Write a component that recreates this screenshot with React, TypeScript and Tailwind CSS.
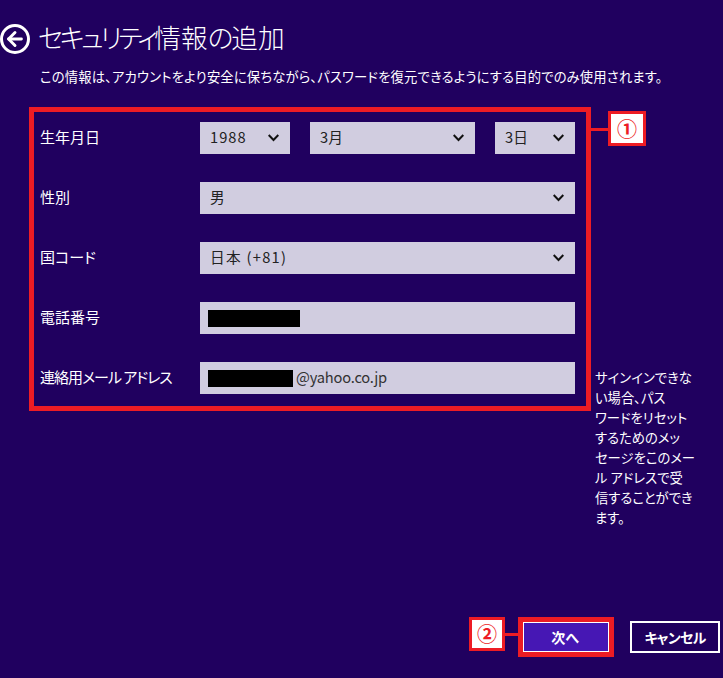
import { ArrowLeft } from "lucide-react";

const font = "[font-family:'Noto_Sans_CJK_JP','Noto_Sans',sans-serif] [font-feature-settings:'palt']";

function Select({ value, width, spacing = "" }: { value: string; width: string; spacing?: string }) {
    return (
        <div className={`${width} h-8 bg-[#d1cde0] flex items-center justify-between pl-[10px] pr-[11px] text-[14.67px] text-[#222]`}>
            <span className={`-mt-0.5 ${spacing}`}>{value}</span>
            <svg width="11" height="8" viewBox="0 0 11 8" fill="none" stroke="#111" strokeWidth="2">
                <path d="M0.7 1 L5.5 6 L10.3 1" />
            </svg>
        </div>
    );
}

function Row({ label, spacing = "", children }: { label: string; spacing?: string; children: React.ReactNode }) {
    return (
        <div className="flex items-center h-8">
            <div className={`w-[160px] -mt-0.5 text-[15px] text-white ${spacing}`}>{label}</div>
            <div className="flex-1 flex justify-between">{children}</div>
        </div>
    );
}

export default function App() {
    return (
        <main className={`${font} w-[723px] h-[678px] bg-[#20005f] text-white overflow-hidden flex flex-col`}>
            {/* Title */}
            <header className="flex items-center h-[30px] mt-[24px]">
                <div className="w-[30px] h-[30px] rounded-full border-[3px] border-white flex items-center justify-center">
                    <ArrowLeft size={22} strokeWidth={3.2} />
                </div>
                <h1 className="ml-[8px] -mt-[3px] text-[26.67px] font-light leading-none">
                    <span className="tracking-[-3.6px]">セキュリティ</span>
                    <span>情報</span>
                    <span className="tracking-[-2px]">の</span>
                    <span>追加</span>
                </h1>
            </header>
            <p className="ml-[40px] mt-[13px] text-[13.33px] leading-5 h-5 tracking-[0.16px]">
                この情報は、アカウントをより安全に保ちながら、パスワードを復元できるようにする目的でのみ使用されます。
            </p>

            <div className="flex items-start mt-[20px]">
                {/* Form frame */}
                <div className="relative ml-[29px] w-[562px] h-[304px] border-[5px] border-[#ed1c24] pt-[10px] pl-[6px] pr-[11px] flex flex-col gap-7">
                    <Row label="生年月日">
                        <Select value="1988" width="w-[90px]" spacing="tracking-[1px]" />
                        <Select value="3月" width="w-[165px]" />
                        <Select value="3日" width="w-[80px]" />
                    </Row>
                    <Row label="性別">
                        <Select value="男" width="w-full" />
                    </Row>
                    <Row label="国コード">
                        <Select value="日本 (+81)" width="w-full" spacing="tracking-[1.3px]" />
                    </Row>
                    <Row label="電話番号">
                        <div className="w-full h-8 bg-[#d1cde0] flex items-center pl-2">
                            <div className="w-[92px] h-[17px] bg-black" />
                        </div>
                    </Row>
                    <Row label="連絡用メール アドレス" spacing="tracking-[-1px]">
                        <div className="w-full h-8 bg-[#d1cde0] flex items-center pl-2 text-[14.67px] text-[#333]">
                            <div className="w-[85px] h-[17px] bg-black mr-[3px]" />
                            <span className="-mt-0.5 tracking-[-0.2px]">@yahoo.co.jp</span>
                        </div>
                    </Row>

                    {/* Callout 1 */}
                    <div className="absolute left-[557px] top-[16px] w-[17px] h-[3px] bg-[#ed1c24]" />
                    <div className="absolute left-[574px] top-[-1px] w-[38px] h-[35px] border-[3px] border-[#ed1c24] bg-white flex items-center justify-center text-[#ed1c24] text-[20px] font-bold">
                        ①
                    </div>
                </div>

                <p className="ml-[4px] mt-[261px] text-[13.33px] leading-[20px] whitespace-nowrap">
                    サインインできな<br />
                    い場合、パス<br />
                    ワードをリセット<br />
                    するためのメッ<br />
                    セージをこのメー<br />
                    ル アドレスで受<br />
                    信することができ<br />
                    ます。
                </p>
            </div>

            {/* Footer */}
            <footer className="mt-auto mb-[21px] pr-[3px] flex items-start justify-end">
                <div className="w-9 h-[34px] border-[3px] border-[#ed1c24] bg-white flex items-center justify-center text-[#ed1c24] text-[20px] font-bold">
                    ②
                </div>
                <div className="w-[13px] h-[3px] mt-4 bg-[#ed1c24]" />
                <div className="w-[96px] h-[40px] border-[5px] border-[#ed1c24]">
                    <button className="w-full h-full border border-white bg-[#4617b4] text-[14px] font-bold pr-0.5">次へ</button>
                </div>
                <button className="ml-4 mt-1 w-[90px] h-8 border-2 border-white text-[14px] font-bold tracking-[-0.7px]">キャンセル</button>
            </footer>
        </main>
    );
}
